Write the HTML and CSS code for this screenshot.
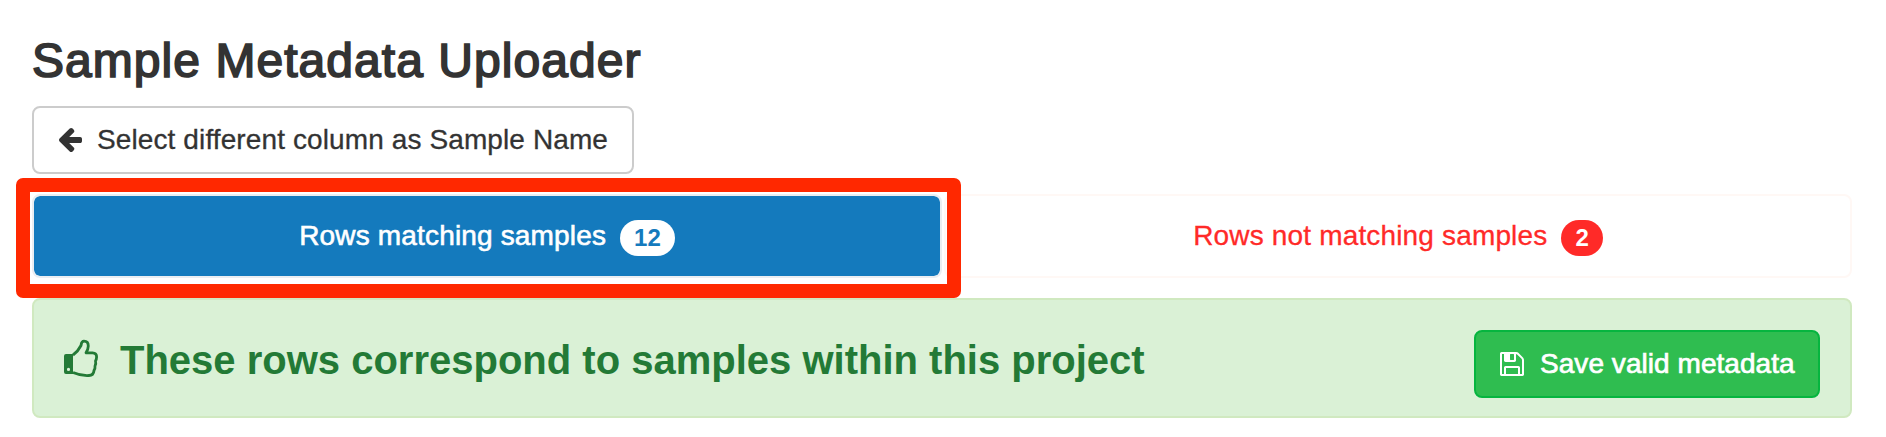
FILE: index.html
```html
<!DOCTYPE html>
<html lang="en">
<head>
<meta charset="utf-8">
<title>Sample Metadata Uploader</title>
<link rel="stylesheet" href="styles.css">
</head>
<body>
<main class="page">
  <h1 class="title">Sample Metadata Uploader</h1>
  <button class="btn btn-default">
    <svg class="icon-arrow" viewBox="192 181 1472 1558" preserveAspectRatio="none"><path d="M1664 896v128q0 53-32.5 90.5t-84.5 37.5h-704l293 294q38 36 38 90t-38 90l-75 76q-37 37-90 37-52 0-91-37l-651-652q-37-37-37-90 0-52 37-91l651-650q38-38 91-38 52 0 90 38l75 74q38 38 38 91t-38 91l-293 293h704q52 0 84.5 37.5t32.5 90.5z"/></svg>
    <span class="select-label">Select different column as Sample Name</span>
  </button>
  <nav class="tabs">
    <a class="tab tab-active"><span class="tab-label">Rows matching samples</span><span class="badge">12</span></a>
    <a class="tab tab-error"><span class="tab-label">Rows not matching samples</span><span class="badge badge-error">2</span></a>
    <div class="highlight"></div>
  </nav>
  <section class="alert">
    <svg class="icon-thumb" viewBox="0 0 34 37"><path class="cuff" fill-rule="evenodd" d="M2 14H9V34H2Q0 34 0 32V16Q0 14 2 14ZM4.5 27.8a1.6 1.6 0 1 0 0 3.2a1.6 1.6 0 1 0 0-3.2Z"/><path class="hand" d="M9 15Q14 11.500 17 5.500Q17.500 1.200 20 1.200Q24.300 1.200 24.300 6Q24.300 9 22 12.800H28.500Q32.700 13 32.600 17Q32.500 19.500 31.500 21Q32.300 24 31 26Q31.300 29 30 30.500Q29.500 35.500 25 35.500Q17 36 9 32.500"/></svg>
    <h2 class="alert-title">These rows correspond to samples within this project</h2>
    <button class="btn btn-save">
      <svg class="icon-save" viewBox="128 128 1536 1536"><path d="M512 1536h768v-384h-768v384zm896 0h128v-896q0-14-10-38.500t-20-34.500l-281-281q-10-10-34-20t-39-10v416q0 40-28 68t-68 28h-576q-40 0-68-28t-28-68v-416h-128v1280h128v-416q0-40 28-68t68-28h832q40 0 68 28t28 68v416zm-384-928v-320q0-13-9.500-22.500t-22.500-9.500h-192q-13 0-22.500 9.500t-9.500 22.500v320q0 13 9.500 22.500t22.500 9.500h192q13 0 22.500-9.500t9.500-22.500zm640 32v928q0 40-28 68t-68 28h-1344q-40 0-68-28t-28-68v-1344q0-40 28-68t68-28h928q40 0 88 20t76 48l280 280q28 28 48 76t20 88z"/></svg>
      <span class="save-label">Save valid metadata</span>
    </button>
  </section>
</main>
</body>
</html>
```
FILE: styles.css
```css
* { box-sizing: border-box; }
body { margin: 0; background: #fff; color: #333; font-family: "Liberation Sans", Arial, sans-serif; }
.page { padding: 31px 34px 0 32px; }
.title { margin: 0 0 15px; font-size: 48px; line-height: 60px; font-weight: 400; letter-spacing: 1.05px; white-space: nowrap; -webkit-text-stroke: 1.7px #333; }
.btn { display: flex; align-items: center; height: 68px; border: 2px solid #ccc; border-radius: 8px; background: #fff; color: #333; font: 28px/40px "Liberation Sans", Arial, sans-serif; white-space: nowrap; }
.btn-default { width: 602px; padding: 0 0 0 25px; }
.icon-arrow { width: 23px; height: 24px; margin-right: 15px; fill: #333; }
.select-label { letter-spacing: .11px; -webkit-text-stroke: .3px #333; }
.tabs { position: relative; display: grid; grid-template-columns: 910px 908px; gap: 2px; margin-top: 20px; }
.tab { display: flex; align-items: center; justify-content: center; height: 84px; border: 2px solid #eaeef2; border-radius: 8px; font-size: 28px; line-height: 40px; white-space: nowrap; }
.tab-label { letter-spacing: .16px; -webkit-text-stroke: .3px currentColor; }
.tab-active { background: #147abd; background-clip: padding-box; color: #fff; }
.tab-active .tab-label { -webkit-text-stroke-width: .6px; }
.tab-error { border-color: #fff8f5; color: #ff2a28; }
.badge { height: 36px; margin: 4px 0 0 14px; padding: 0 14px; border-radius: 20px; background: #fff; color: #147abd; font-size: 24px; line-height: 36px; font-weight: 700; }
.badge-error { background: #ff2a28; color: #fff; }
.highlight { position: absolute; left: -16px; top: -16px; width: 945px; height: 120px; border: 14px solid #ff2800; border-radius: 7px; }
.alert { display: flex; align-items: center; height: 120px; margin-top: 20px; padding: 4px 30px 0; border: 2px solid #d0e9c0; border-radius: 8px; background: #daf1d6; color: #237a36; }
.icon-thumb { width: 34px; height: 37px; margin-bottom: 3px; overflow: visible; }
.cuff { fill: #237a36; }
.hand { fill: none; stroke: #237a36; stroke-width: 2.800; stroke-linejoin: round; }
.alert-title { margin: 0 0 0 22px; font-size: 40px; line-height: 48px; font-weight: 700; white-space: nowrap; }
.btn-save { width: 346px; margin: 8px 0 0 auto; padding: 0 0 0 24px; border-color: #06b53f; background: #2fbd50; color: #fff; }
.save-label { letter-spacing: .05px; -webkit-text-stroke: .7px #fff; }
.icon-save { width: 24px; height: 24px; margin-right: 16px; fill: #fff; }
```
